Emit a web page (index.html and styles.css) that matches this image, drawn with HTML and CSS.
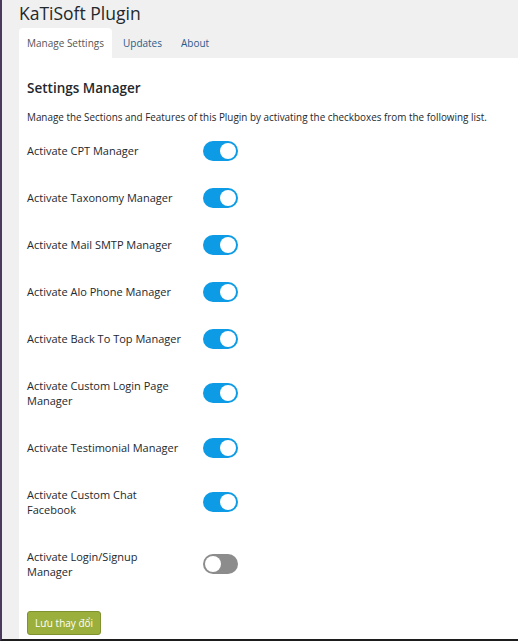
FILE: index.html
```html
<!DOCTYPE html>
<html lang="vi">
<head>
    <meta charset="UTF-8">
    <meta name="viewport" content="width=device-width, initial-scale=1.0">
    <title>KaTiSoft Plugin</title>
    <link rel="stylesheet" href="styles.css">
</head>
<body>
    <div class="wrap">
        <h1 class="title">KaTiSoft Plugin</h1>

        <div class="tabs">
            <a class="tab active" href="#">Manage Settings</a>
            <a class="tab" href="#">Updates</a>
            <a class="tab" href="#">About</a>
        </div>

        <div class="panel">
            <h2>Settings Manager</h2>
            <p class="desc">Manage the Sections and Features of this Plugin by activating the checkboxes from the following list.</p>

            <div class="settings">
                <div class="row">
                    <div class="label">Activate CPT Manager</div>
                    <label class="switch"><input type="checkbox" checked><span class="slider"></span></label>
                </div>
                <div class="row">
                    <div class="label">Activate Taxonomy Manager</div>
                    <label class="switch"><input type="checkbox" checked><span class="slider"></span></label>
                </div>
                <div class="row">
                    <div class="label">Activate Mail SMTP Manager</div>
                    <label class="switch"><input type="checkbox" checked><span class="slider"></span></label>
                </div>
                <div class="row">
                    <div class="label">Activate Alo Phone Manager</div>
                    <label class="switch"><input type="checkbox" checked><span class="slider"></span></label>
                </div>
                <div class="row">
                    <div class="label">Activate Back To Top Manager</div>
                    <label class="switch"><input type="checkbox" checked><span class="slider"></span></label>
                </div>
                <div class="row">
                    <div class="label">Activate Custom Login Page Manager</div>
                    <label class="switch"><input type="checkbox" checked><span class="slider"></span></label>
                </div>
                <div class="row">
                    <div class="label">Activate Testimonial Manager</div>
                    <label class="switch"><input type="checkbox" checked><span class="slider"></span></label>
                </div>
                <div class="row">
                    <div class="label">Activate Custom Chat Facebook</div>
                    <label class="switch"><input type="checkbox" checked><span class="slider"></span></label>
                </div>
                <div class="row">
                    <div class="label">Activate Login/Signup Manager</div>
                    <label class="switch"><input type="checkbox"><span class="slider"></span></label>
                </div>
            </div>

            <button class="save">Lưu thay đổi</button>
        </div>
    </div>
</body>
</html>
```

FILE: styles.css
```css
html, body {
    margin: 0;
    padding: 0;
}
body {
    font-family: "Open Sans", "Noto Sans", sans-serif;
    background-color: #f0f0f0;
    color: #23282d;
    border-left: 2px solid #4a3b5c;
    height: 639px;
    border-bottom: 2px solid #1d1d1d;
    overflow: hidden;
}
.wrap {
    padding-left: 17px;
    height: 100%;
    display: flex;
    flex-direction: column;
}
.title {
    flex-shrink: 0;
    font-size: 17.5px;
    font-weight: 400;
    line-height: 26px;
    margin: 0;
    height: 28px;
    color: #23282d;
}
.tabs {
    flex-shrink: 0;
    display: flex;
    height: 30px;
}
.tab {
    display: flex;
    align-items: center;
    padding: 0 8px;
    margin-right: 3px;
    font-size: 10px;
    color: #2c5b8a;
    text-decoration: none;
    border-radius: 4px 4px 0 0;
}
.tab.active {
    background: white;
    color: #555;
}
.panel {
    flex: 1;
    background: white;
    padding: 20px 8px 0;
}
.panel h2 {
    font-size: 13.5px;
    font-weight: 600;
    margin: 0 0 12px;
    line-height: 20px;
}
.desc {
    font-size: 9.9px;
    margin: 0 0 3px;
    line-height: 14px;
}
.row {
    display: flex;
    align-items: center;
}
.label {
    width: 155px;
    padding: 16px 0;
    font-size: 11px;
    line-height: 15px;
    margin-right: 21px;
}
.switch {
    position: relative;
    display: inline-block;
    width: 35px;
    height: 20px;
}
.switch input {
    opacity: 0;
    width: 0;
    height: 0;
}
.slider {
    position: absolute;
    inset: 0;
    background-color: #8c8c8c;
    border-radius: 10px;
    cursor: pointer;
}
.slider:before {
    content: "";
    position: absolute;
    width: 16px;
    height: 16px;
    left: 2px;
    top: 2px;
    background: white;
    border-radius: 50%;
}
.switch input:checked + .slider {
    background-color: #0d9be6;
}
.switch input:checked + .slider:before {
    transform: translateX(15px);
}
.save {
    margin-top: 16px;
    font-family: inherit;
    font-size: 10px;
    color: white;
    background: #9aaf3c;
    border: 1px solid #7f9230;
    border-radius: 3px;
    padding: 0 7px;
    height: 24px;
    cursor: pointer;
}
```
